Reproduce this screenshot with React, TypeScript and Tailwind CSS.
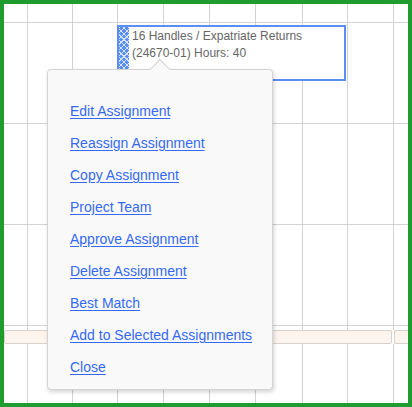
import React from "react";

const cols = [24, 45, 45, 46, 46, 46, 47, 45, 46, 14];
const rows = [19, 101, 101, 101];

const items = [
  "Edit Assignment",
  "Reassign Assignment",
  "Copy Assignment",
  "Project Team",
  "Approve Assignment",
  "Delete Assignment",
  "Best Match",
  "Add to Selected Assignments",
  "Close",
];

function GridRow({ h, last }: { h: number; last?: boolean }) {
  return (
    <div className={"flex " + (last ? "" : "border-b border-[#d2d2d2]")} style={{ height: h }}>
      {cols.map((w, i) => (
        <div
          key={i}
          className={i < cols.length - 1 ? "border-r border-[#d2d2d2] shrink-0" : "flex-1"}
          style={{ width: i < cols.length - 1 ? w : undefined }}
        />
      ))}
    </div>
  );
}

export default function App() {
  return (
    <div className="w-[412px] h-[407px] border-4 border-[#1f9c2e] bg-white relative overflow-hidden font-['Liberation_Sans',Arial,sans-serif]">
      <div className="flex flex-col h-full">
        {rows.map((h, i) => (
          <GridRow key={i} h={h} />
        ))}
        <GridRow h={4} last />
        <div className="flex h-[14px] gap-[2px] pr-0">
          <div className="w-[388px] shrink-0 bg-[#fdf4ee] border border-[#d8d2ce] rounded-[2px]" />
          <div className="flex-1 bg-[#fdf4ee] border border-[#d8d2ce] border-r-0 rounded-l-[2px]" />
        </div>
        <div className="flex-1 flex flex-col">
          <div className="flex-1 flex">
            {cols.map((w, i) => (
              <div
                key={i}
                className={i < cols.length - 1 ? "border-r border-[#d2d2d2] shrink-0" : "flex-1"}
                style={{ width: i < cols.length - 1 ? w : undefined }}
              />
            ))}
          </div>
        </div>
      </div>

      {/* Assignment block */}
      <div className="absolute left-[113px] top-[21px] w-[229px] h-[56px] border-2 border-[#5b8ef2] bg-white flex">
        <div className="w-[10px] shrink-0 bg-[#5b8ef2] bg-[repeating-linear-gradient(45deg,transparent_0_3px,#d6e2fc_3px_4px),repeating-linear-gradient(-45deg,#5b8ef2_0_3px,#d6e2fc_3px_4px)]" />
        <div className="pl-[3px] pt-[1px] text-[12px] leading-[17px] text-[#666] whitespace-nowrap">
          <div>16 Handles / Expatriate Returns</div>
          <div>(24670-01) Hours: 40</div>
        </div>
      </div>

      {/* Popover */}
      <div className="absolute left-[43px] top-[65px] w-[226px] h-[321px] bg-[#f9f9f9] border border-[#d4d4d4] rounded-[4px] shadow-[1px_2px_4px_rgba(0,0,0,0.18)]">
        <div className="absolute left-[105px] top-[-8px] w-[14px] h-[14px] rotate-45 bg-[#f9f9f9] border-t border-l border-[#d4d4d4]" />
        <div className="relative pt-[25px] pl-[22px] flex flex-col">
          {items.map((t) => (
            <a
              key={t}
              href="#"
              className="h-[32px] leading-[32px] text-[14px] text-[#3569f5] underline underline-offset-[2px] whitespace-nowrap self-start"
            >
              {t}
            </a>
          ))}
        </div>
      </div>
    </div>
  );
}
